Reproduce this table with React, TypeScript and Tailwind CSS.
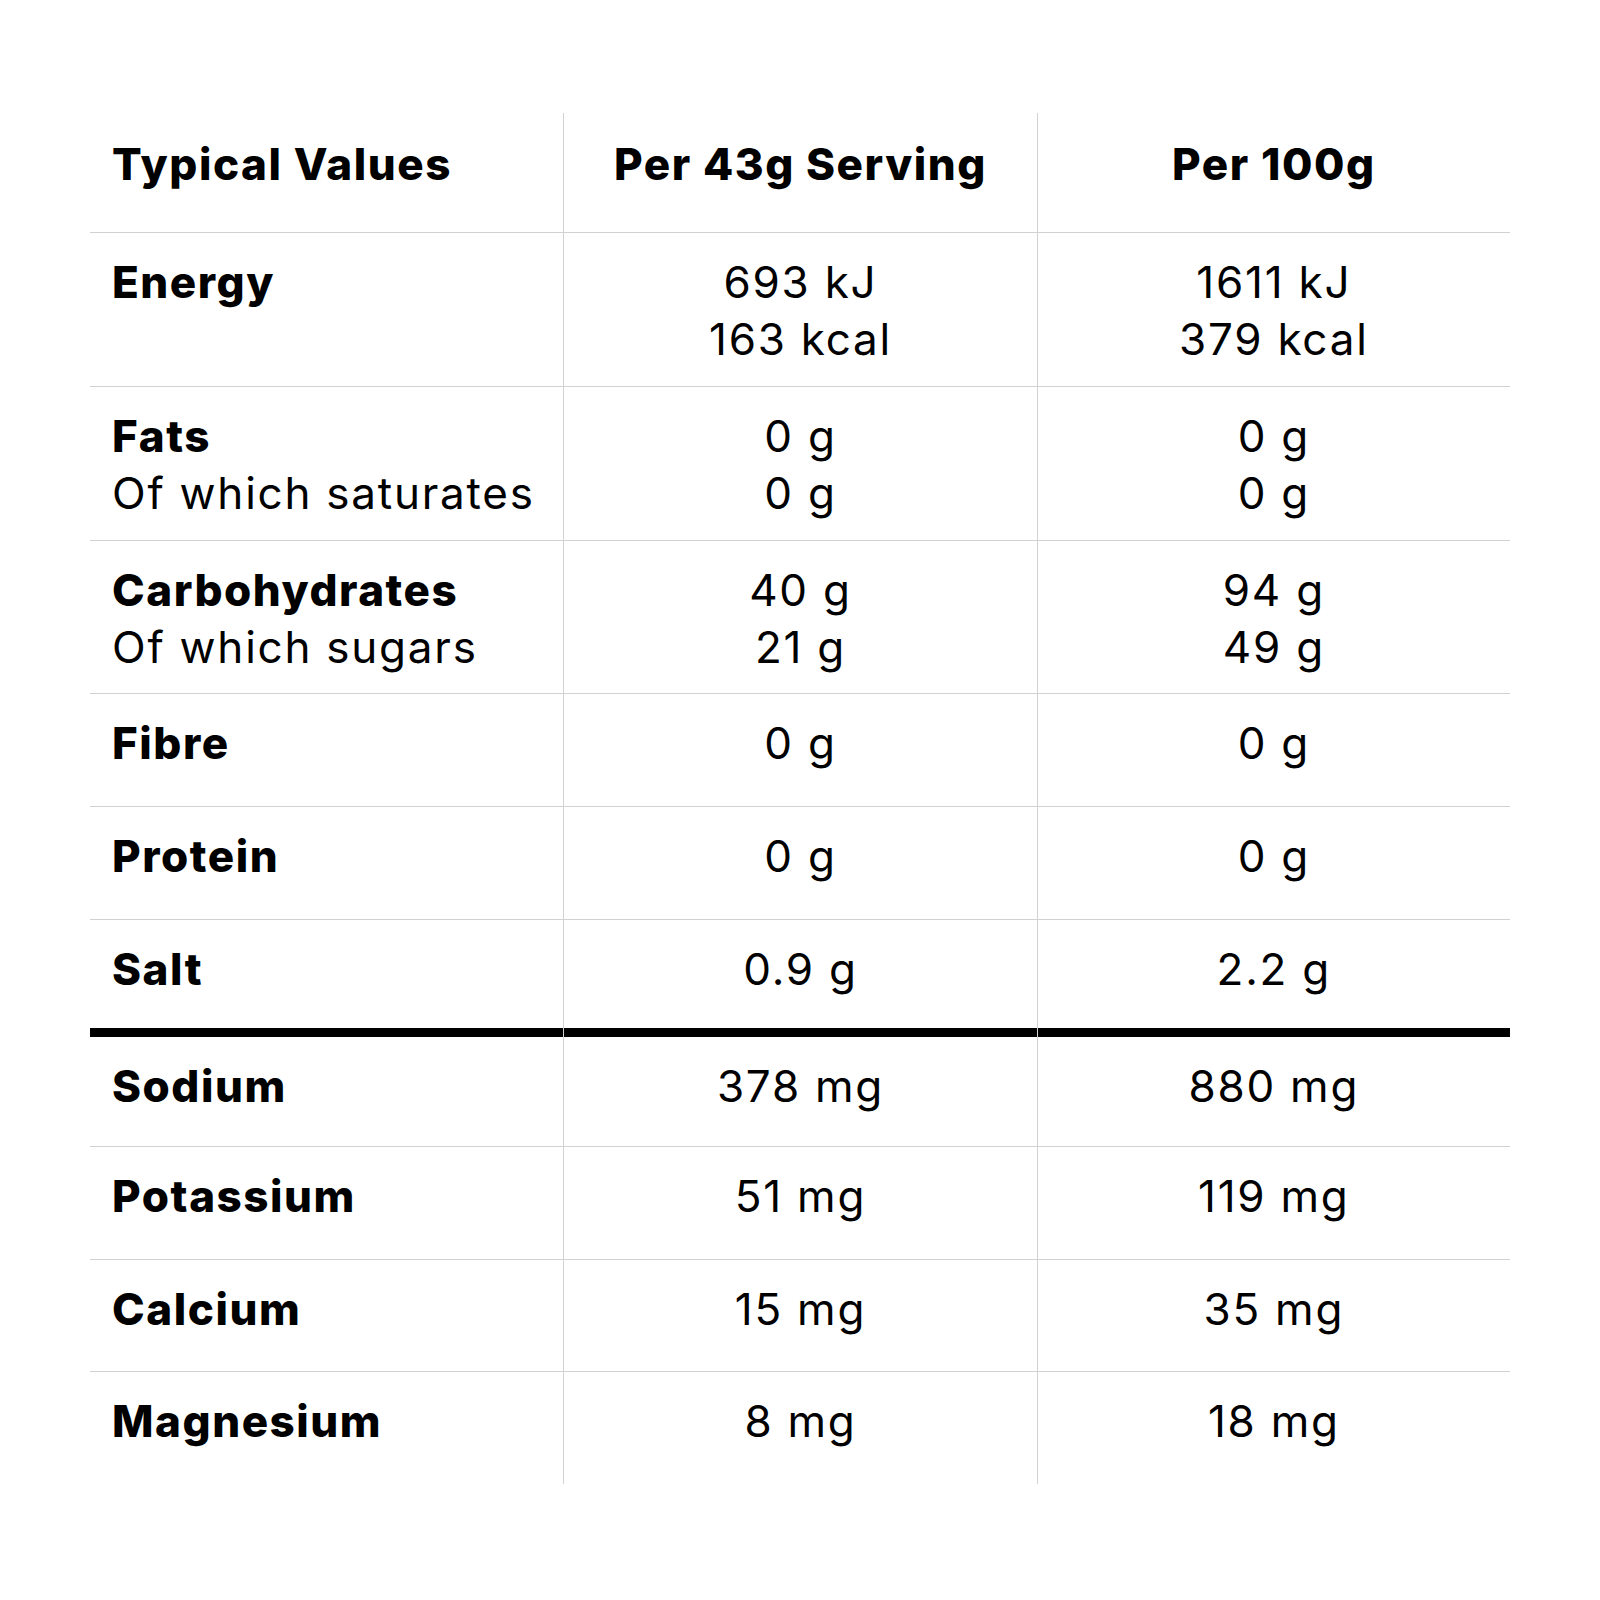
const ROWS = [
  { label: 'Energy', sub: '', a: ['693 kJ', '163 kcal'], b: ['1611 kJ', '379 kcal'], h: 'h-[154px]' },
  { label: 'Fats', sub: 'Of which saturates', a: ['0 g', '0 g'], b: ['0 g', '0 g'], h: 'h-[154px]' },
  { label: 'Carbohydrates', sub: 'Of which sugars', a: ['40 g', '21 g'], b: ['94 g', '49 g'], h: 'h-[153px]' },
  { label: 'Fibre', sub: '', a: ['0 g'], b: ['0 g'], h: 'h-[113px]' },
  { label: 'Protein', sub: '', a: ['0 g'], b: ['0 g'], h: 'h-[113px]' },
  { label: 'Salt', sub: '', a: ['0.9 g'], b: ['2.2 g'], h: 'h-[109px]' },
]

const MINERALS = [
  { label: 'Sodium', a: '378 mg', b: '880 mg', h: 'h-[109px]', line: false },
  { label: 'Potassium', a: '51 mg', b: '119 mg', h: 'h-[113px]', line: true },
  { label: 'Calcium', a: '15 mg', b: '35 mg', h: 'h-[112px]', line: true },
  { label: 'Magnesium', a: '8 mg', b: '18 mg', h: 'h-[113px]', line: true },
]

export default function App() {
  return (
    <div className="min-h-[1600px] bg-white pt-[113px] pl-[90px] text-black font-[family-name:Inter,sans-serif] text-[44px] leading-[57px] tracking-[0.04em]">
      <div className="w-[1420px] flex flex-col">
        {/* header */}
        <div className="grid grid-cols-3 h-[119px] font-extrabold tracking-[0.035em]">
          <div className="pl-[22px] pt-[23px]">Typical Values</div>
          <div className="border-l border-[#d2d2d2] pt-[23px] text-center">Per 43g Serving</div>
          <div className="border-l border-[#d2d2d2] pt-[23px] text-center">Per 100g</div>
        </div>

        {ROWS.map((r) => (
          <div key={r.label} className={`grid grid-cols-3 border-t border-[#d2d2d2] ${r.h}`}>
            <div className="pl-[22px] pt-[21px]">
              <div className="font-extrabold tracking-[0.035em]">{r.label}</div>
              {r.sub && <div>{r.sub}</div>}
            </div>
            <div className="border-l border-[#d2d2d2] pt-[21px] text-center">
              {r.a.map((v, i) => (
                <div key={i}>{v}</div>
              ))}
            </div>
            <div className="border-l border-[#d2d2d2] pt-[21px] text-center">
              {r.b.map((v, i) => (
                <div key={i}>{v}</div>
              ))}
            </div>
          </div>
        ))}

        {/* thick divider */}
        <div className="grid grid-cols-3 h-[9px]">
          <div className="bg-black" />
          <div className="bg-black border-l border-[#d2d2d2]" />
          <div className="bg-black border-l border-[#d2d2d2]" />
        </div>

        {MINERALS.map((m) => (
          <div key={m.label} className={`grid grid-cols-3 ${m.line ? 'border-t border-[#d2d2d2]' : ''} ${m.h}`}>
            <div className="pl-[22px] pt-[21px] font-extrabold tracking-[0.035em]">{m.label}</div>
            <div className="border-l border-[#d2d2d2] pt-[21px] text-center">{m.a}</div>
            <div className="border-l border-[#d2d2d2] pt-[21px] text-center">{m.b}</div>
          </div>
        ))}
      </div>
    </div>
  )
}
